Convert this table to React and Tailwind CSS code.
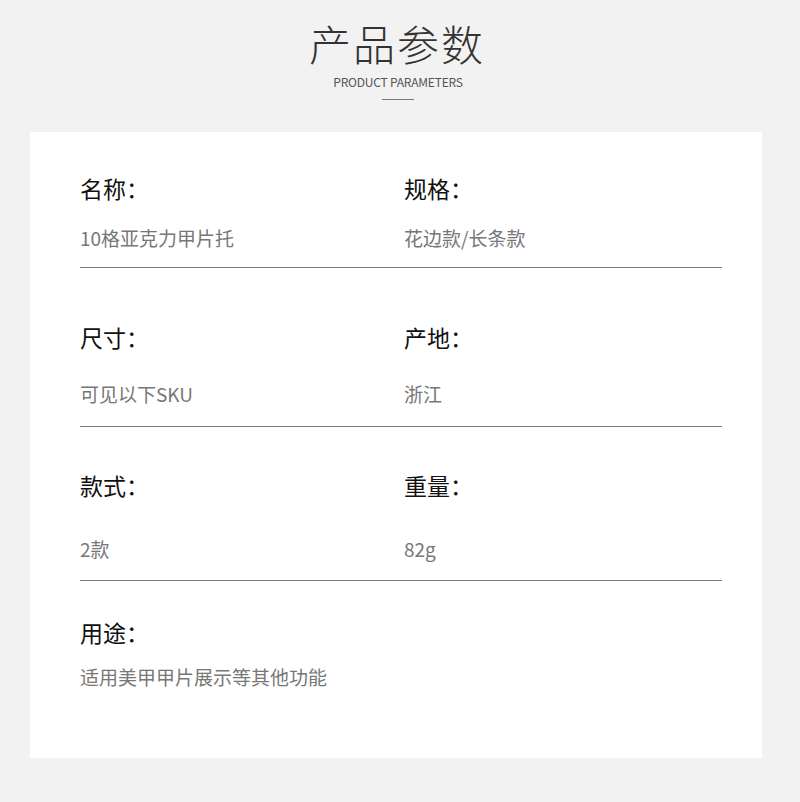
const rows = [
  {
    items: [
      { label: '名称：', value: '10格亚克力甲片托' },
      { label: '规格：', value: '花边款/长条款' },
    ],
    top: 'pt-[45px]',
    gap: 'mt-[28px]',
    bottom: 'pb-[20px]',
    line: true,
  },
  {
    items: [
      { label: '尺寸：', value: '可见以下SKU' },
      { label: '产地：', value: '浙江' },
    ],
    top: 'pt-[58px]',
    gap: 'mt-[35px]',
    bottom: 'pb-[23px]',
    line: true,
  },
  {
    items: [
      { label: '款式：', value: '2款' },
      { label: '重量：', value: '82g' },
    ],
    top: 'pt-[47px]',
    gap: 'mt-[42px]',
    bottom: 'pb-[22px]',
    line: true,
  },
  {
    items: [{ label: '用途：', value: '适用美甲甲片展示等其他功能' }],
    top: 'pt-[40px]',
    gap: 'mt-[23px]',
    bottom: 'pb-0',
    line: false,
  },
];

const font = { fontFamily: '"Noto Sans CJK SC", "Noto Sans", sans-serif' };

export default function App() {
  return (
    <div className="w-[800px] h-[802px] bg-[#f2f2f2] overflow-hidden" style={font}>
      {/* Header */}
      <div className="flex flex-col items-center pt-[20px]">
        <h1 className="text-[42px] leading-[46px] font-light text-[#333] tracking-[2px] pl-[2px] -ml-[8px]">产品参数</h1>
        <p className="mt-[10px] text-[12px] leading-none text-[#555] tracking-[-0.2px] -ml-[4px]">PRODUCT PARAMETERS</p>
        <div className="mt-[11px] w-[32px] h-px bg-[#777] -ml-[4px]" />
      </div>

      {/* Card */}
      <div className="ml-[30px] mr-[38px] mt-[32px] h-[626px] bg-white pl-[50px] pr-[40px]">
        {rows.map((row, i) => (
          <div key={i} className={`${row.top} ${row.bottom} ${row.line ? 'border-b border-[#7a7a7a]' : ''}`}>
            <div className="grid grid-cols-[324px_1fr]">
              {row.items.map((it) => (
                <div key={it.label}>
                  <div className="text-[23px] leading-none text-[#111]">{it.label}</div>
                  <div className={`${row.gap} text-[19px] leading-none text-[#777]`}>{it.value}</div>
                </div>
              ))}
            </div>
          </div>
        ))}
      </div>
    </div>
  );
}
